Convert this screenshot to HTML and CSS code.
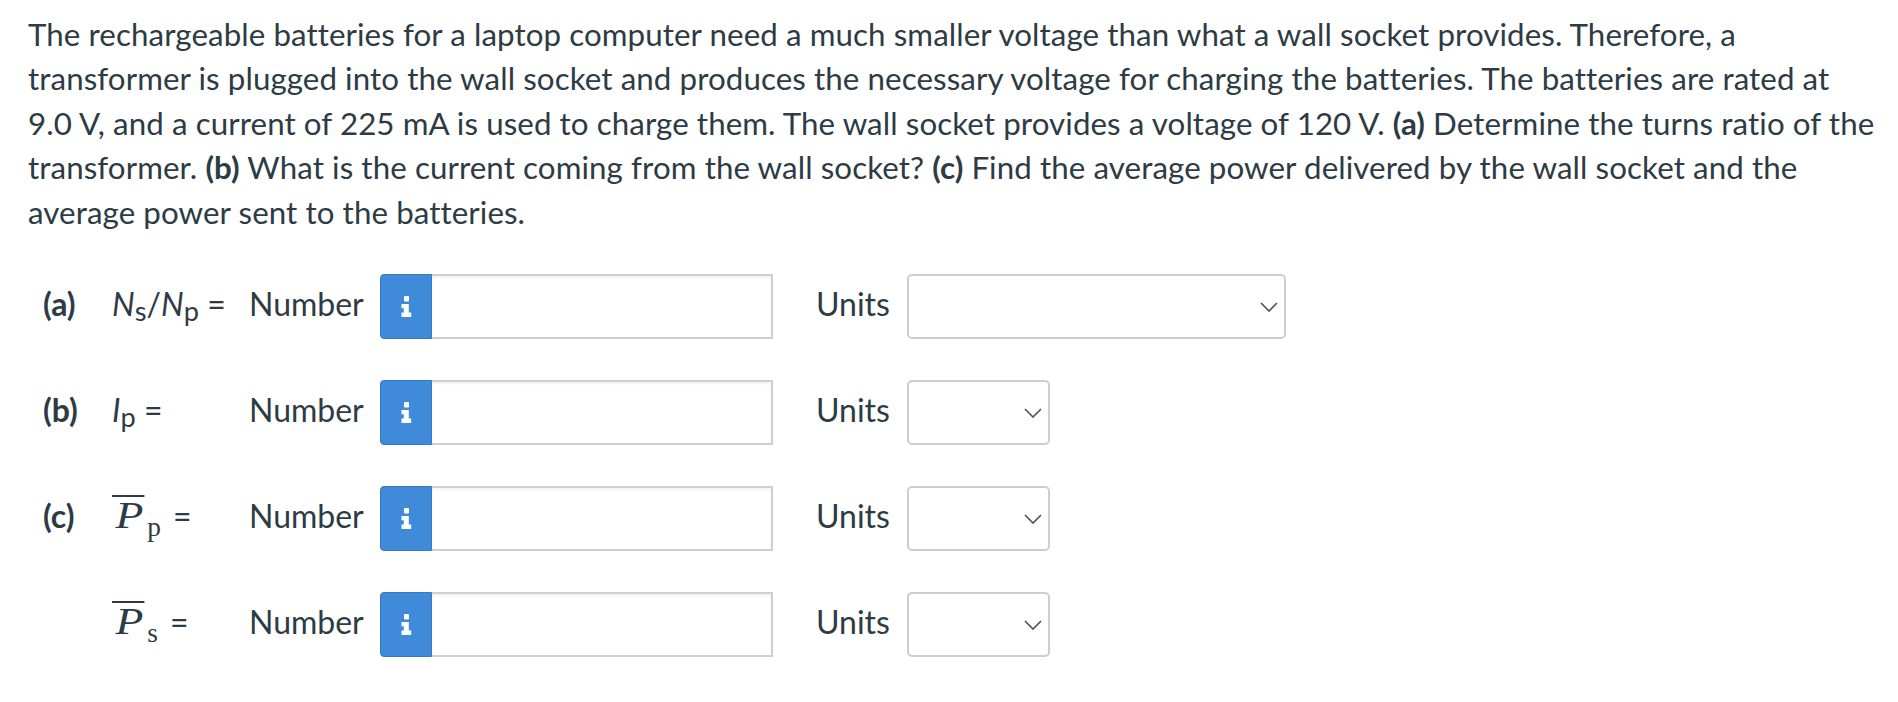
FILE: index.html
```html
<!DOCTYPE html>
<html>
<head>
<meta charset="utf-8">
<link rel="stylesheet" href="styles.css">
</head>
<body>
<div class="page">
  <p class="question">The rechargeable batteries for a laptop computer need a much smaller voltage than what a wall socket provides. Therefore, a<br>transformer is plugged into the wall socket and produces the necessary voltage for charging the batteries. The batteries are rated at<br>9.0&nbsp;V, and a current of 225&nbsp;mA is used to charge them. The wall socket provides a voltage of 120&nbsp;V. <b>(a)</b> Determine the turns ratio of the<br>transformer. <b>(b)</b> What is the current coming from the wall socket? <b>(c)</b> Find the average power delivered by the wall socket and the<br>average power sent to the batteries.</p>

  <div class="answers">
    <div class="row">
      <span class="part">(a)</span>
      <span class="var"><i>N</i><span class="sub">s</span>/<i>N</i><span class="sub">p</span> =</span>
      <span class="lbl">Number</span>
      <div class="field">
        <span class="info"><svg width="11" height="21" viewBox="0 0 11 21"><rect x="3" y="0" width="5" height="5.5" rx="1" fill="#fff"/><path d="M0.5 8 H7.8 V16.5 H10.2 V21 H0.5 V16.5 H2.8 V12.3 H0.5 Z" fill="#fff"/></svg></span>
        <span class="num"></span>
      </div>
      <span class="units">Units</span>
      <div class="sel wide"><svg width="18" height="10" viewBox="0 0 18 10"><polyline points="1,1 9,9 17,1" fill="none" stroke="#555" stroke-width="1.7"/></svg></div>
    </div>

    <div class="row">
      <span class="part">(b)</span>
      <span class="var"><i>I</i><span class="sub">p</span> =</span>
      <span class="lbl">Number</span>
      <div class="field">
        <span class="info"><svg width="11" height="21" viewBox="0 0 11 21"><rect x="3" y="0" width="5" height="5.5" rx="1" fill="#fff"/><path d="M0.5 8 H7.8 V16.5 H10.2 V21 H0.5 V16.5 H2.8 V12.3 H0.5 Z" fill="#fff"/></svg></span>
        <span class="num"></span>
      </div>
      <span class="units">Units</span>
      <div class="sel narrow"><svg width="18" height="10" viewBox="0 0 18 10"><polyline points="1,1 9,9 17,1" fill="none" stroke="#555" stroke-width="1.7"/></svg></div>
    </div>

    <div class="row">
      <span class="part">(c)</span>
      <span class="var"><span class="math"><span class="bar">P</span><span class="msub">p</span></span> =</span>
      <span class="lbl">Number</span>
      <div class="field">
        <span class="info"><svg width="11" height="21" viewBox="0 0 11 21"><rect x="3" y="0" width="5" height="5.5" rx="1" fill="#fff"/><path d="M0.5 8 H7.8 V16.5 H10.2 V21 H0.5 V16.5 H2.8 V12.3 H0.5 Z" fill="#fff"/></svg></span>
        <span class="num"></span>
      </div>
      <span class="units">Units</span>
      <div class="sel narrow"><svg width="18" height="10" viewBox="0 0 18 10"><polyline points="1,1 9,9 17,1" fill="none" stroke="#555" stroke-width="1.7"/></svg></div>
    </div>

    <div class="row">
      <span class="part"></span>
      <span class="var"><span class="math"><span class="bar">P</span><span class="msub">s</span></span> =</span>
      <span class="lbl">Number</span>
      <div class="field">
        <span class="info"><svg width="11" height="21" viewBox="0 0 11 21"><rect x="3" y="0" width="5" height="5.5" rx="1" fill="#fff"/><path d="M0.5 8 H7.8 V16.5 H10.2 V21 H0.5 V16.5 H2.8 V12.3 H0.5 Z" fill="#fff"/></svg></span>
        <span class="num"></span>
      </div>
      <span class="units">Units</span>
      <div class="sel narrow"><svg width="18" height="10" viewBox="0 0 18 10"><polyline points="1,1 9,9 17,1" fill="none" stroke="#555" stroke-width="1.7"/></svg></div>
    </div>
  </div>
</div>
</body>
</html>
```

FILE: styles.css
```css
body {
  margin: 0;
  background: #ffffff;
  color: #2d3b45;
  font-family: Lato, "Liberation Sans", sans-serif;
}

.page {
  padding: 12px 0 0 28px;
}

.question {
  margin: 0;
  width: 1868px;
  white-space: nowrap;
  font-size: 31.3px;
  letter-spacing: 0.08px;
  line-height: 44.4px;
}

.question b {
  font-weight: 700;
}

.answers {
  margin: 40px 0 0 15px;
  display: flex;
  flex-direction: column;
  gap: 41px;
  font-size: 32px;
}

.row {
  display: flex;
  align-items: center;
  height: 65px;
}

.part,
.var,
.lbl,
.units {
  padding-bottom: 7px;
}

.part {
  width: 69px;
  font-weight: 700;
}

.var {
  width: 137px;
  white-space: nowrap;
}

.sub {
  font-size: 0.85em;
  vertical-align: -0.2em;
  line-height: 0;
}

.math {
  font-family: "Liberation Serif", "Times New Roman", serif;
  font-size: 38px;
}

.bar {
  display: inline-block;
  font-style: italic;
  border-top: 2px solid #2d3b45;
  line-height: 26px;
  padding-top: 5px;
  padding-left: 3px;
  padding-right: 1px;
  transform: scaleX(1.2);
  transform-origin: left center;
  margin-right: 5px;
}

.msub {
  font-size: 0.72em;
  vertical-align: -0.3em;
  line-height: 0;
  margin-left: 3px;
  margin-right: 4px;
}

.lbl {
  width: 131px;
}

.field {
  display: flex;
  width: 393px;
  height: 65px;
}

.info {
  width: 52px;
  box-sizing: border-box;
  background: #3f8bda;
  border: 1px solid #3479c5;
  border-radius: 4px 0 0 4px;
  display: flex;
  align-items: center;
  justify-content: center;
}

.num {
  flex: 1;
  box-sizing: border-box;
  border: 2px solid #cfcfcf;
  border-left: none;
  box-shadow: inset 0 2px 3px rgba(0, 0, 0, 0.05);
  background: #fff;
}

.units {
  margin-left: 43px;
  width: 91px;
}

.sel {
  height: 65px;
  box-sizing: border-box;
  border: 2px solid #cdcdcd;
  border-radius: 5px;
  display: flex;
  align-items: center;
  justify-content: flex-end;
  padding-right: 6px;
  background: #fff;
}

.sel.wide {
  width: 379px;
}

.sel.narrow {
  width: 143px;
}
```
